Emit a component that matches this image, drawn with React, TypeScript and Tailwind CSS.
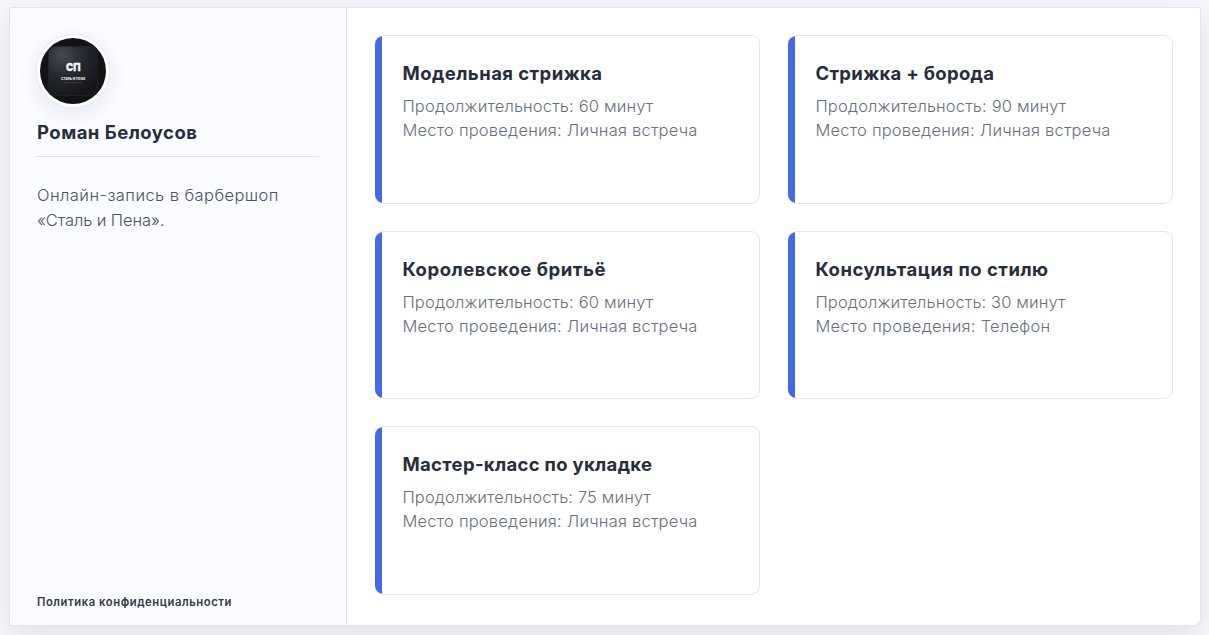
type Service = {
  title: string;
  titleTracking: string;
  duration: string;
  durationTracking: string;
  place: string;
  placeTracking: string;
};

const services: Service[] = [
  { title: "Модельная стрижка", titleTracking: "tracking-[0.44px]", duration: "60 минут", durationTracking: "tracking-[0.16px]", place: "Личная встреча", placeTracking: "tracking-[0.21px]" },
  { title: "Стрижка + борода", titleTracking: "tracking-[0.3px]", duration: "90 минут", durationTracking: "tracking-[0.16px]", place: "Личная встреча", placeTracking: "tracking-[0.21px]" },
  { title: "Королевское бритьё", titleTracking: "tracking-[0.54px]", duration: "60 минут", durationTracking: "tracking-[0.16px]", place: "Личная встреча", placeTracking: "tracking-[0.21px]" },
  { title: "Консультация по стилю", titleTracking: "tracking-[0.49px]", duration: "30 минут", durationTracking: "tracking-[0.13px]", place: "Телефон", placeTracking: "tracking-[0.26px]" },
  { title: "Мастер-класс по укладке", titleTracking: "tracking-[0.31px]", duration: "75 минут", durationTracking: "tracking-[0.12px]", place: "Личная встреча", placeTracking: "tracking-[0.21px]" },
];

function Avatar() {
  return (
    <div className="size-[72px] rounded-full border-[3px] border-white shadow-[0_0_0_1px_#e6ebf3,0_6px_22px_rgba(50,60,100,0.1)]">
      <svg viewBox="0 0 66 66" className="size-[66px] rounded-full">
        <defs>
          <radialGradient id="tile" cx="0.28" cy="0.18" r="0.85">
            <stop offset="0" stopColor="#454954" />
            <stop offset="0.5" stopColor="#262930" />
            <stop offset="1" stopColor="#15171b" />
          </radialGradient>
        </defs>
        <rect width="66" height="66" fill="#131314" />
        <rect x="8.5" y="8.5" width="49" height="49" rx="7" fill="url(#tile)" stroke="#24262b" strokeWidth="0.6" />
        <text x="33.2" y="33.4" textAnchor="middle" fontFamily="Inter, sans-serif" fontWeight="900" fontSize="11" textLength="14.5" lengthAdjust="spacingAndGlyphs" fill="#f4f4f5" stroke="#f4f4f5" strokeWidth="0.3">СП</text>
        <text x="33" y="41.6" textAnchor="middle" fontFamily="Inter, sans-serif" fontWeight="700" fontSize="3.8" textLength="24" lengthAdjust="spacingAndGlyphs" fill="#f1f1f2">Сталь и Пена</text>
        <path d="M24 44.7h18" stroke="#777a80" strokeWidth="0.8" strokeDasharray="1.4 0.6" opacity="0.6" />
      </svg>
    </div>
  );
}

function ServiceCard({ service }: { service: Service }) {
  return (
    <article className="flex overflow-hidden rounded-[9px] border border-l-0 border-[#e2e6ea] bg-white">
      <div className="-my-px w-[7px] shrink-0 bg-[#4169e8]" />
      <div className="pt-[23px] pl-[20.5px] whitespace-nowrap">
        <h2 className={`text-[18.5px] leading-7 font-bold text-[#272e3b] ${service.titleTracking}`}>{service.title}</h2>
        <div className="pt-[7px] text-[16.5px] leading-[24px] font-light text-[#66707d]">
          <p className={service.durationTracking}>Продолжительность: {service.duration}</p>
          <p className={service.placeTracking}>Место проведения: {service.place}</p>
        </div>
      </div>
    </article>
  );
}

export default function App() {
  return (
    <div className="h-[635px] w-full overflow-hidden bg-[#f6f8fc] pt-2 pr-[9px] pl-[10px] font-['Inter',sans-serif]">
      <main className="flex h-[617px] overflow-hidden rounded-[2px] rounded-br-[7px] bg-white shadow-[0_0_0_1px_#e1e6ed,0_8px_28px_rgba(40,45,50,0.12)]">
        <aside className="flex w-[337px] shrink-0 flex-col border-r border-[#dfe4ec] bg-[#fafcff] px-[27px] pt-[27px] pb-[15px]">
          <Avatar />
          <h1 className="mt-[11px] border-b border-[#dfe4ec] pb-[9.5px] text-[18.5px] leading-7 font-bold tracking-[0.48px] text-[#272e3b]">Роман Белоусов</h1>
          <p className="pt-[26px] text-[16.5px] leading-[25px] font-light whitespace-nowrap text-[#485260]">
            <span className="tracking-[0.44px]">Онлайн-запись в барбершоп</span>
            <br />
            <span className="tracking-[-0.08px]">«Сталь и Пена».</span>
          </p>
          <a href="#" className="mt-auto text-[11.25px] leading-4 font-semibold tracking-[0.56px] text-[#303745]">Политика конфиденциальности</a>
        </aside>
        <section className="grid flex-1 auto-rows-[168.5px] grid-cols-2 gap-x-[28px] gap-y-[27px] pt-[27.4px] pr-[27px] pl-[28px]">
          {services.map((service) => (
            <ServiceCard key={service.title} service={service} />
          ))}
        </section>
      </main>
    </div>
  );
}
